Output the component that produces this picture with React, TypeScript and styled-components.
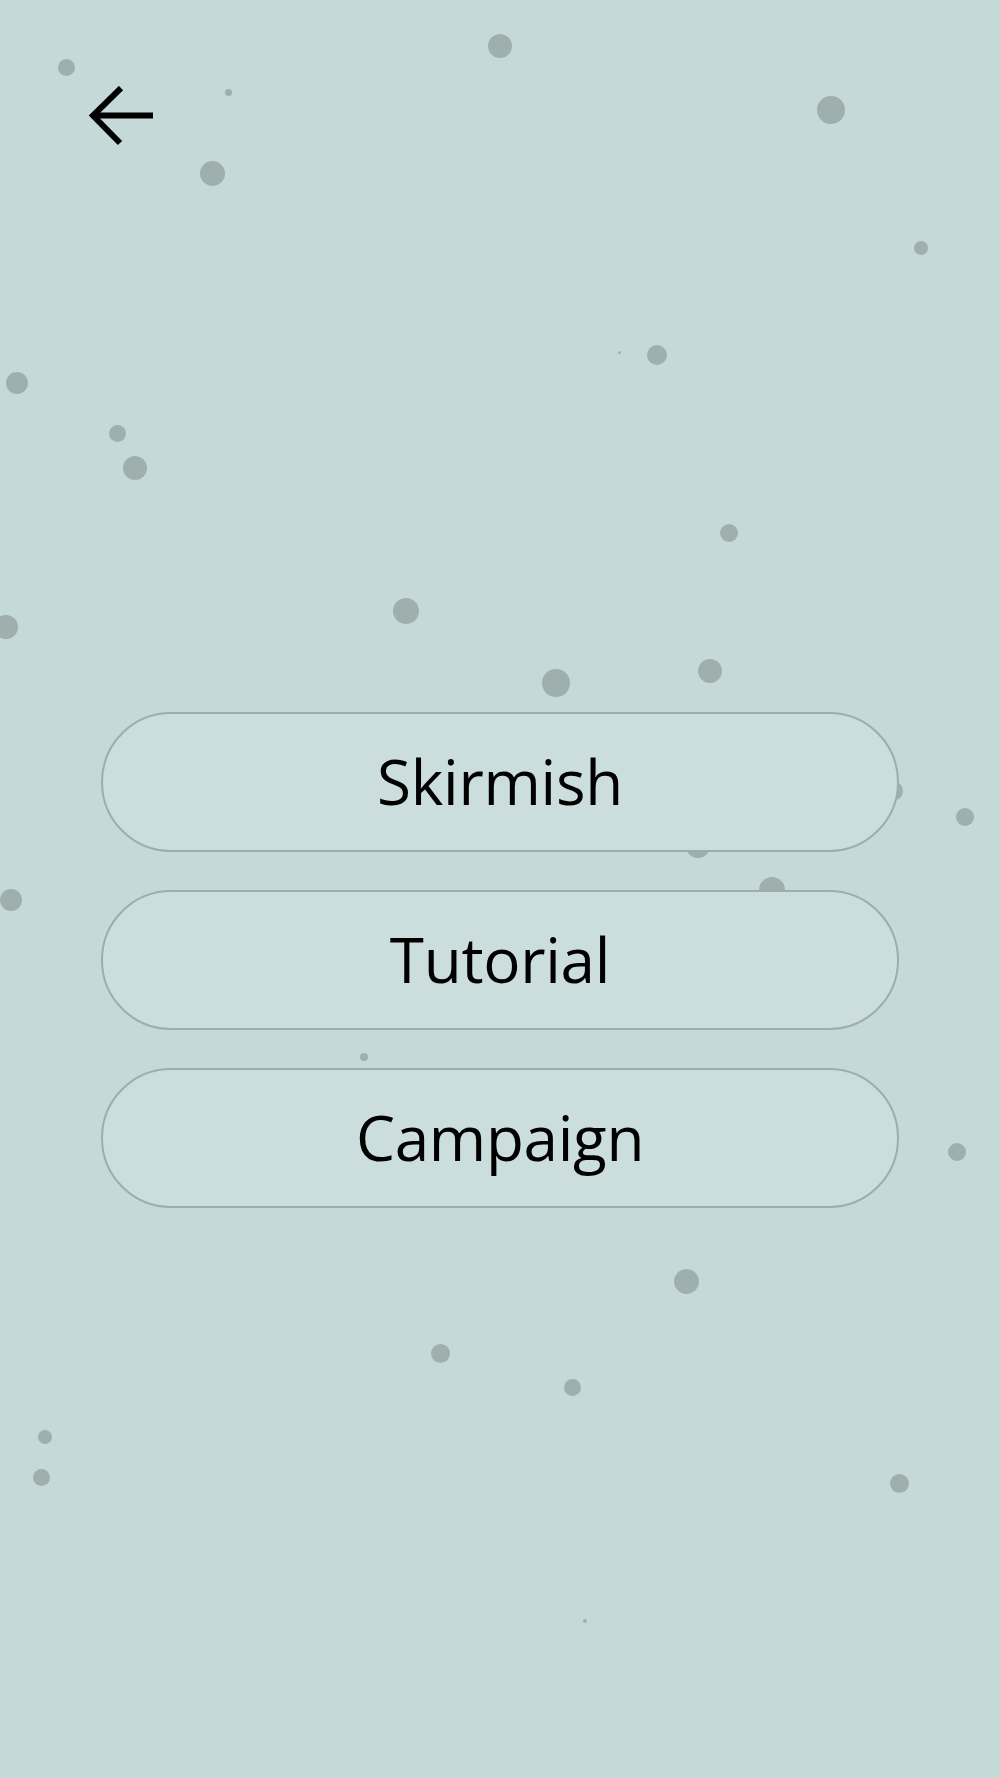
import React from 'react'
import styled, { createGlobalStyle } from 'styled-components'

const GlobalStyle = createGlobalStyle`
  html, body {
    margin: 0;
    padding: 0;
    background-color: #c5d9d8;
  }
  * {
    box-sizing: border-box;
  }
`

const Screen = styled.div`
  position: relative;
  width: 1000px;
  height: 1778px;
  overflow: hidden;
  background-color: #c5d9d8;
  font-family: 'Open Sans', 'Noto Sans', sans-serif;
`

const Particles = styled.div`
  position: absolute;
  inset: 0;
  z-index: 0;
`

const Dot = styled.span<{ $x: number; $y: number; $d: number }>`
  position: absolute;
  left: ${(p) => p.$x - p.$d / 2}px;
  top: ${(p) => p.$y - p.$d / 2}px;
  width: ${(p) => p.$d}px;
  height: ${(p) => p.$d}px;
  border-radius: 50%;
  background-color: #9eafae;
`

const Content = styled.div`
  position: relative;
  z-index: 1;
  display: flex;
  flex-direction: column;
`

const Header = styled.header`
  display: flex;
  align-items: center;
  padding: 86px 0 0 88px;
  height: 146px;
`

const BackButton = styled.button`
  display: flex;
  padding: 0;
  border: none;
  background: none;
  cursor: pointer;
`

const Menu = styled.nav`
  display: flex;
  flex-direction: column;
  gap: 38px;
  padding: 566px 101px 0;
`

const MenuButton = styled.button`
  display: flex;
  align-items: center;
  justify-content: center;
  height: 140px;
  width: 100%;
  padding: 0 0 2px;
  border: 2px solid #9dadac;
  border-radius: 70px;
  background-color: #cbdedd;
  color: #000;
  font-family: 'Open Sans', 'Noto Sans', sans-serif;
  font-size: 62px;
  font-weight: 400;
  letter-spacing: -0.3px;
  line-height: 1;
  cursor: pointer;
`

// particle field: [centre x, centre y, diameter]
const dots: [number, number, number][] = [
  [66, 67, 17],
  [500, 46, 24],
  [228, 92, 7],
  [831, 110, 28],
  [212, 173, 25],
  [921, 248, 14],
  [619, 352, 3],
  [657, 355, 20],
  [17, 383, 22],
  [117, 433, 17],
  [135, 468, 24],
  [729, 533, 18],
  [406, 611, 26],
  [6, 627, 24],
  [556, 683, 28],
  [710, 671, 24],
  [893, 791, 20],
  [965, 817, 18],
  [698, 846, 24],
  [772, 890, 26],
  [11, 900, 22],
  [364, 1057, 8],
  [957, 1152, 18],
  [686, 1281, 25],
  [440, 1353, 19],
  [572, 1387, 17],
  [45, 1437, 14],
  [41, 1477, 17],
  [899, 1483, 19],
  [585, 1621, 4],
]

const BackArrow = () => (
  <svg width="66" height="60" viewBox="0 0 66 60" fill="none">
    <path d="M65 29.5H5" stroke="#000" strokeWidth="6" />
    <path d="M33 2L5 29.5L32 57" stroke="#000" strokeWidth="6" strokeLinejoin="miter" />
  </svg>
)

const App: React.FC = () => (
  <>
    <GlobalStyle />
    <Screen>
      <Particles>
        {dots.map(([x, y, d], i) => (
          <Dot key={i} $x={x} $y={y} $d={d} />
        ))}
      </Particles>
      <Content>
        <Header>
          <BackButton aria-label="Back">
            <BackArrow />
          </BackButton>
        </Header>
        <Menu>
          <MenuButton>Skirmish</MenuButton>
          <MenuButton>Tutorial</MenuButton>
          <MenuButton>Campaign</MenuButton>
        </Menu>
      </Content>
    </Screen>
  </>
)

export default App
